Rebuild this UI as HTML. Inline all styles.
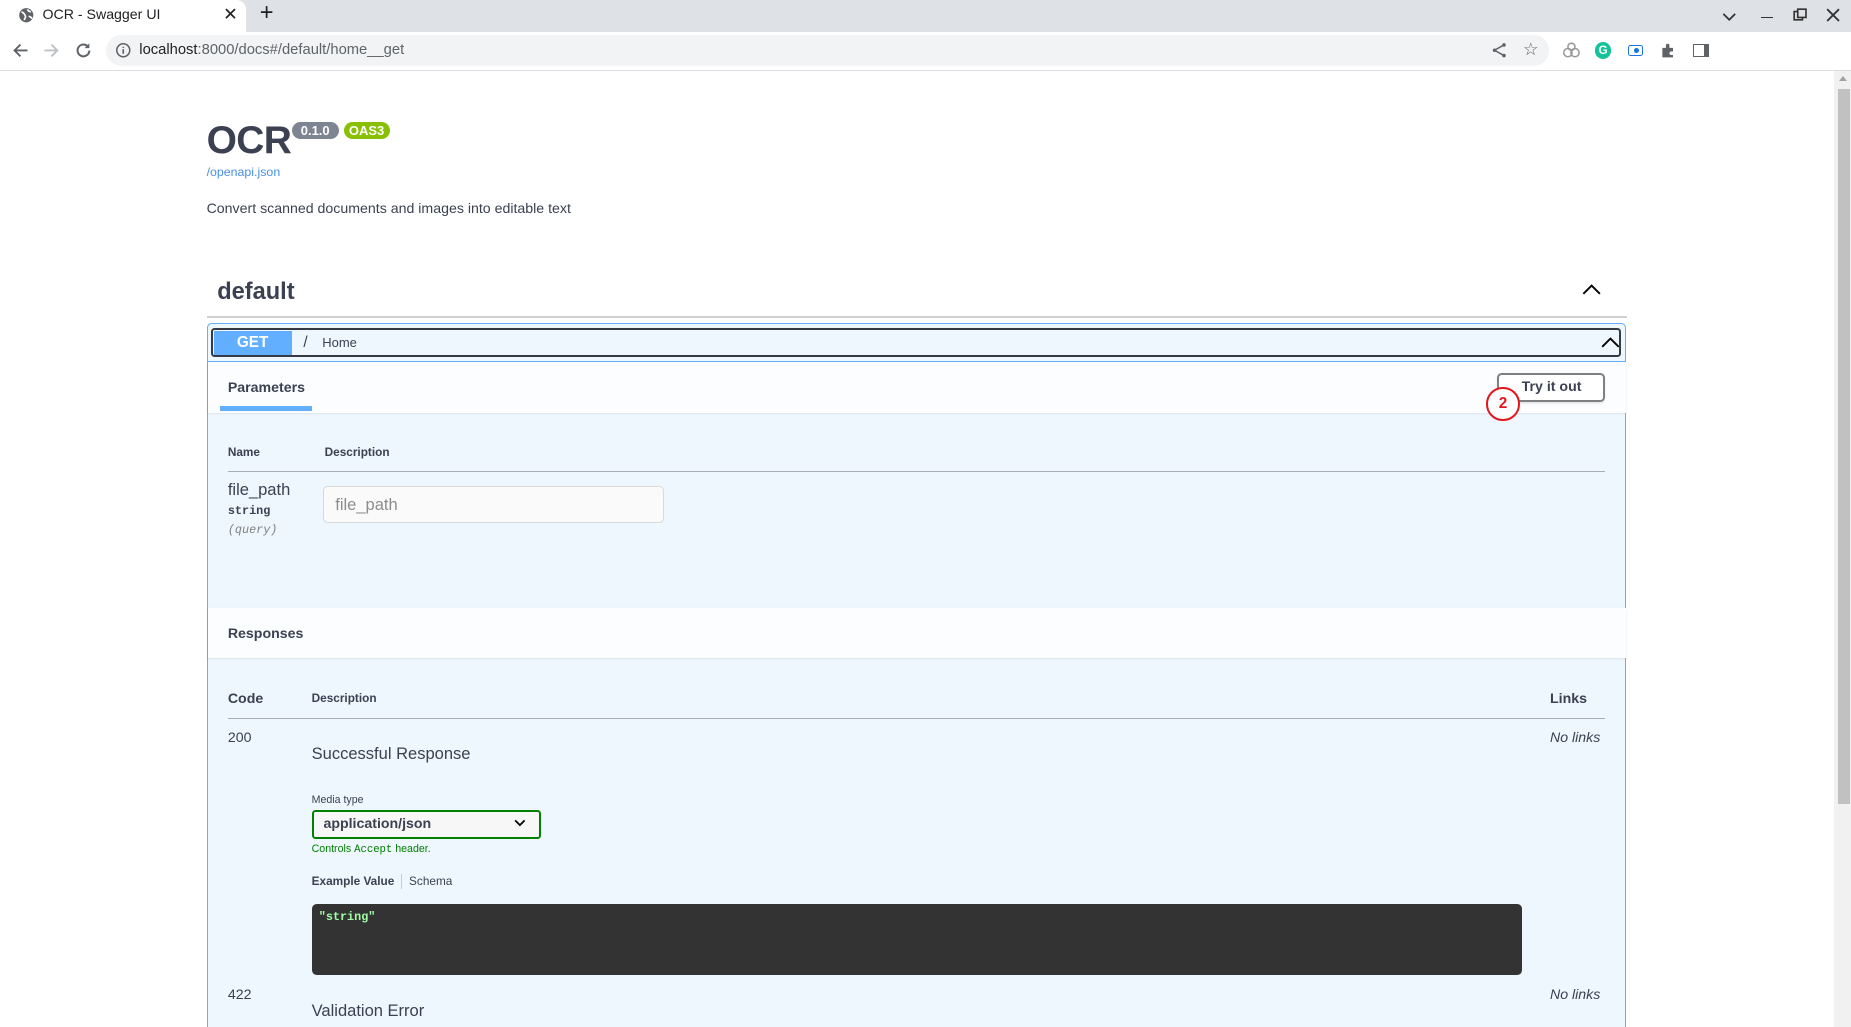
<!DOCTYPE html>
<html><head><meta charset="utf-8"><style>
html,body{margin:0;padding:0;background:#fff;overflow:hidden}
body{zoom:1.1805;width:1568px;height:870px;position:relative;font-family:"Liberation Sans",sans-serif;color:#3b4151}
.a{position:absolute;white-space:nowrap}
.mono{font-family:"Liberation Mono",monospace}
</style></head><body>
<!-- tab bar -->
<div class="a" style="left:0;top:0;width:1568px;height:27px;background:#dee1e6"></div>
<div class="a" style="left:0;top:0;width:208px;height:27px;background:#fff;border-radius:0 8px 0 0"></div>
<svg class="a" style="left:15px;top:6px" width="14" height="14" viewBox="0 0 14 14"><circle cx="7" cy="7" r="6" fill="#5f6368"/><path d="M3 4q2 1 3 3t-1 4M8 2q1 2 3 2M9 8q2 0 3 2" stroke="#fff" stroke-width="1.4" fill="none"/></svg>
<div class="a" style="left:36px;top:6px;font-size:12px;color:#202124">OCR - Swagger UI</div>
<div class="a" style="left:189px;top:3px;font-size:15px;color:#202124">✕</div>
<div class="a" style="left:220px;top:0px;font-size:20px;color:#202124">+</div>
<svg class="a" style="left:1458px;top:7px" width="14" height="14"><path d="M2 5l5 5 5-5" stroke="#333" stroke-width="1.5" fill="none"/></svg>
<div class="a" style="left:1492px;top:14px;width:10px;height:1.5px;background:#333"></div>
<svg class="a" style="left:1519px;top:7px" width="12" height="12"><rect x="1" y="3" width="7" height="7" fill="none" stroke="#333" stroke-width="1.4"/><rect x="4" y="1" width="7" height="7" fill="#dee1e6" stroke="#333" stroke-width="1.4"/></svg>
<svg class="a" style="left:1547px;top:7px" width="12" height="12"><path d="M1 1l10 10M11 1L1 11" stroke="#333" stroke-width="1.6"/></svg>
<!-- toolbar -->
<div class="a" style="left:0;top:27px;width:1568px;height:32px;background:#fff;border-bottom:1px solid #dadce0"></div>
<svg class="a" style="left:9px;top:35px" width="16" height="16"><path d="M14 8H3M8 3L3 8l5 5" stroke="#5f6368" stroke-width="1.6" fill="none"/></svg>
<svg class="a" style="left:36px;top:35px" width="16" height="16"><path d="M2 8h11M8 3l5 5-5 5" stroke="#bdc1c6" stroke-width="1.6" fill="none"/></svg>
<svg class="a" style="left:63px;top:35px" width="16" height="16"><path d="M13 8a5 5 0 1 1-1.5-3.6" stroke="#5f6368" stroke-width="1.7" fill="none"/><path d="M13 2v4h-4z" fill="#5f6368"/></svg>
<div class="a" style="left:90px;top:30px;width:1222px;height:26px;background:#f1f3f4;border-radius:13px"></div>
<svg class="a" style="left:97px;top:36px" width="14" height="14"><circle cx="7" cy="7" r="5.5" stroke="#5f6368" stroke-width="1.3" fill="none"/><path d="M7 6v4M7 4v1" stroke="#5f6368" stroke-width="1.4"/></svg>
<div class="a" style="left:118px;top:36px;font-size:12.5px;color:#5f6368"><span style="color:#202124">localhost</span>:8000/docs#/default/home__get</div>
<svg class="a" style="left:1263px;top:36px" width="14" height="14"><circle cx="11" cy="2.5" r="1.5" fill="#5f6368"/><circle cx="11" cy="11.5" r="1.5" fill="#5f6368"/><circle cx="3" cy="7" r="1.5" fill="#5f6368"/><path d="M11 2.5L3 7l8 4.5" stroke="#5f6368" stroke-width="1.3" fill="none"/></svg>
<div class="a" style="left:1290px;top:33px;font-size:15px;color:#5f6368">☆</div>
<svg class="a" style="left:1323px;top:36px" width="16" height="14"><circle cx="5" cy="9" r="3.5" stroke="#999" fill="none" stroke-width="1.3"/><circle cx="11" cy="9" r="3.5" stroke="#999" fill="none" stroke-width="1.3"/><circle cx="8" cy="4" r="3" stroke="#999" fill="none" stroke-width="1.3"/></svg>
<div class="a" style="left:1351px;top:36px;width:14px;height:14px;border-radius:50%;background:#15c39a;color:#fff;font-size:10px;font-weight:bold;text-align:center;line-height:14px">G</div>
<div class="a" style="left:1379px;top:38px;width:11px;height:8px;border:1.5px solid #1a73e8;border-radius:2px"></div>
<div class="a" style="left:1384px;top:41px;width:4px;height:4px;border-radius:50%;background:#1a73e8"></div>
<svg class="a" style="left:1406px;top:36px" width="14" height="14"><path d="M2 5h3V3a1.5 1.5 0 0 1 3 0v2h3v3h-1.5a1.5 1.5 0 0 0 0 3H11v2H2z" fill="#5f6368"/></svg>
<div class="a" style="left:1434px;top:37px;width:9px;height:10px;border:1.6px solid #5f6368;border-right:5px solid #5f6368"></div>
<!-- scrollbar -->
<div class="a" style="left:1554px;top:60px;width:14px;height:810px;background:#f1f1f1"></div>
<div class="a" style="left:1557px;top:75px;width:10px;height:606px;background:#c1c1c1"></div>
<div class="a" style="left:1558px;top:64px;width:0;height:0;border-left:4px solid transparent;border-right:4px solid transparent;border-bottom:5px solid #a3a3a3"></div>
<!-- header -->
<div class="a" style="left:175px;top:101px;font-size:33px;font-weight:bold;color:#3b4151;letter-spacing:-0.5px">OCR</div>
<div class="a" style="left:247px;top:103px;width:40px;height:15px;border-radius:8px;background:#7d8492;color:#fff;font-size:11px;font-weight:bold;text-align:center;line-height:15px">0.1.0</div>
<div class="a" style="left:291px;top:103px;width:39px;height:15px;border-radius:8px;background:#89bf04;color:#fff;font-size:11px;font-weight:bold;text-align:center;line-height:15px">OAS3</div>
<div class="a" style="left:175px;top:140px;font-size:10.5px;color:#4990e2">/openapi.json</div>
<div class="a" style="left:175px;top:170px;font-size:12px">Convert scanned documents and images into editable text</div>
<div class="a" style="left:184px;top:236px;font-size:20px;font-weight:bold">default</div>
<svg class="a" style="left:1339px;top:239px" width="18" height="12"><path d="M2 10l7-7 7 7" stroke="#000" stroke-width="1.6" fill="none"/></svg>
<div class="a" style="left:175px;top:268px;width:1203px;height:1px;background:#cfd1d5"></div>
<!-- opblock -->
<div class="a" style="left:175px;top:274px;width:1201px;height:600px;border:1px solid #61affe;border-radius:4px;background:#eef6fe"></div>
<div class="a" style="left:179px;top:278px;width:1191px;height:21px;border:2px solid #353a45;border-radius:3px"></div>
<div class="a" style="left:181px;top:280px;width:66px;height:21px;background:#61affe;color:#fff;font-size:13px;font-weight:bold;text-align:center;line-height:21px">GET</div>
<div class="a" style="left:257px;top:283px;font-size:13px">/</div>
<div class="a" style="left:273px;top:284px;font-size:11px">Home</div>
<svg class="a" style="left:1356px;top:284px" width="16" height="12"><path d="M1 10l7-7 7 7" stroke="#000" stroke-width="1.6" fill="none"/></svg>
<div class="a" style="left:176px;top:306px;width:1201px;height:1px;background:#61affe"></div>
<div class="a" style="left:176px;top:307px;width:1201px;height:43px;background:#fbfdff;box-shadow:0 1px 2px rgba(0,0,0,.1)"></div>
<div class="a" style="left:193px;top:322px;font-size:12px;font-weight:bold">Parameters</div>
<div class="a" style="left:186px;top:344px;width:78px;height:4px;background:#61affe"></div>
<div class="a" style="left:1268px;top:316px;width:88px;height:21px;border:2px solid #808080;border-radius:4px;background:#fff;box-shadow:0 1px 2px rgba(0,0,0,.1)"></div>
<div class="a" style="left:1289px;top:321px;font-size:12px;font-weight:bold">Try it out</div>
<div class="a" style="left:1259px;top:328px;width:25px;height:25px;border:2px solid #e3161c;border-radius:50%;background:#fff;color:#e3161c;font-size:13px;font-weight:bold;text-align:center;line-height:25px">2</div>
<div class="a" style="left:193px;top:377px;font-size:10px;font-weight:bold">Name</div>
<div class="a" style="left:275px;top:377px;font-size:10px;font-weight:bold">Description</div>
<div class="a" style="left:193px;top:399px;width:1167px;height:1px;background:#a9adb6"></div>
<div class="a" style="left:193px;top:407px;font-size:14px">file_path</div>
<div class="a mono" style="left:193px;top:427px;font-size:10px;font-weight:bold">string</div>
<div class="a mono" style="left:193px;top:443px;font-size:10px;font-style:italic;color:#808080">(query)</div>
<div class="a" style="left:274px;top:412px;width:287px;height:29px;border:1px solid #d9d9d9;border-radius:4px;background:#fafafa"></div>
<div class="a" style="left:284px;top:419px;font-size:14px;color:#8d8d8d">file_path</div>
<div class="a" style="left:176px;top:515px;width:1201px;height:42px;background:#fbfdff;box-shadow:0 1px 2px rgba(0,0,0,.1)"></div>
<div class="a" style="left:193px;top:530px;font-size:12px;font-weight:bold">Responses</div>
<div class="a" style="left:193px;top:585px;font-size:12px;font-weight:bold">Code</div>
<div class="a" style="left:264px;top:585px;font-size:10px;font-weight:bold">Description</div>
<div class="a" style="left:1313px;top:585px;font-size:12px;font-weight:bold">Links</div>
<div class="a" style="left:193px;top:608px;width:1167px;height:1px;background:#a9adb6"></div>
<div class="a" style="left:193px;top:618px;font-size:12px">200</div>
<div class="a" style="left:264px;top:630px;font-size:14px">Successful Response</div>
<div class="a" style="left:1313px;top:618px;font-size:12px;font-style:italic">No links</div>
<div class="a" style="left:264px;top:673px;font-size:9px">Media type</div>
<div class="a" style="left:264px;top:686px;width:191px;height:21px;border:2px solid #008000;border-radius:3px;background:#f7f7f7"></div>
<div class="a" style="left:274px;top:691px;font-size:12px;font-weight:bold">application/json</div>
<svg class="a" style="left:435px;top:693px" width="10" height="8"><path d="M1 2l4 4 4-4" stroke="#000" stroke-width="1.5" fill="none"/></svg>
<div class="a" style="left:264px;top:714px;font-size:9px;color:#008000">Controls <span class="mono">Accept</span> header.</div>
<div class="a" style="left:264px;top:740px;font-size:10px"><b>Example Value</b> <span style="display:inline-block;width:1px;height:12px;background:#ccc;vertical-align:middle;margin:0 3px"></span> Schema</div>
<div class="a" style="left:264px;top:766px;width:1025px;height:60px;background:#333;border-radius:4px"></div>
<div class="a mono" style="left:270px;top:771px;font-size:10px;font-weight:bold;color:#a2fca2">"string"</div>
<div class="a" style="left:193px;top:836px;font-size:12px">422</div>
<div class="a" style="left:264px;top:848px;font-size:14px">Validation Error</div>
<div class="a" style="left:1313px;top:836px;font-size:12px;font-style:italic">No links</div>
</body></html>
